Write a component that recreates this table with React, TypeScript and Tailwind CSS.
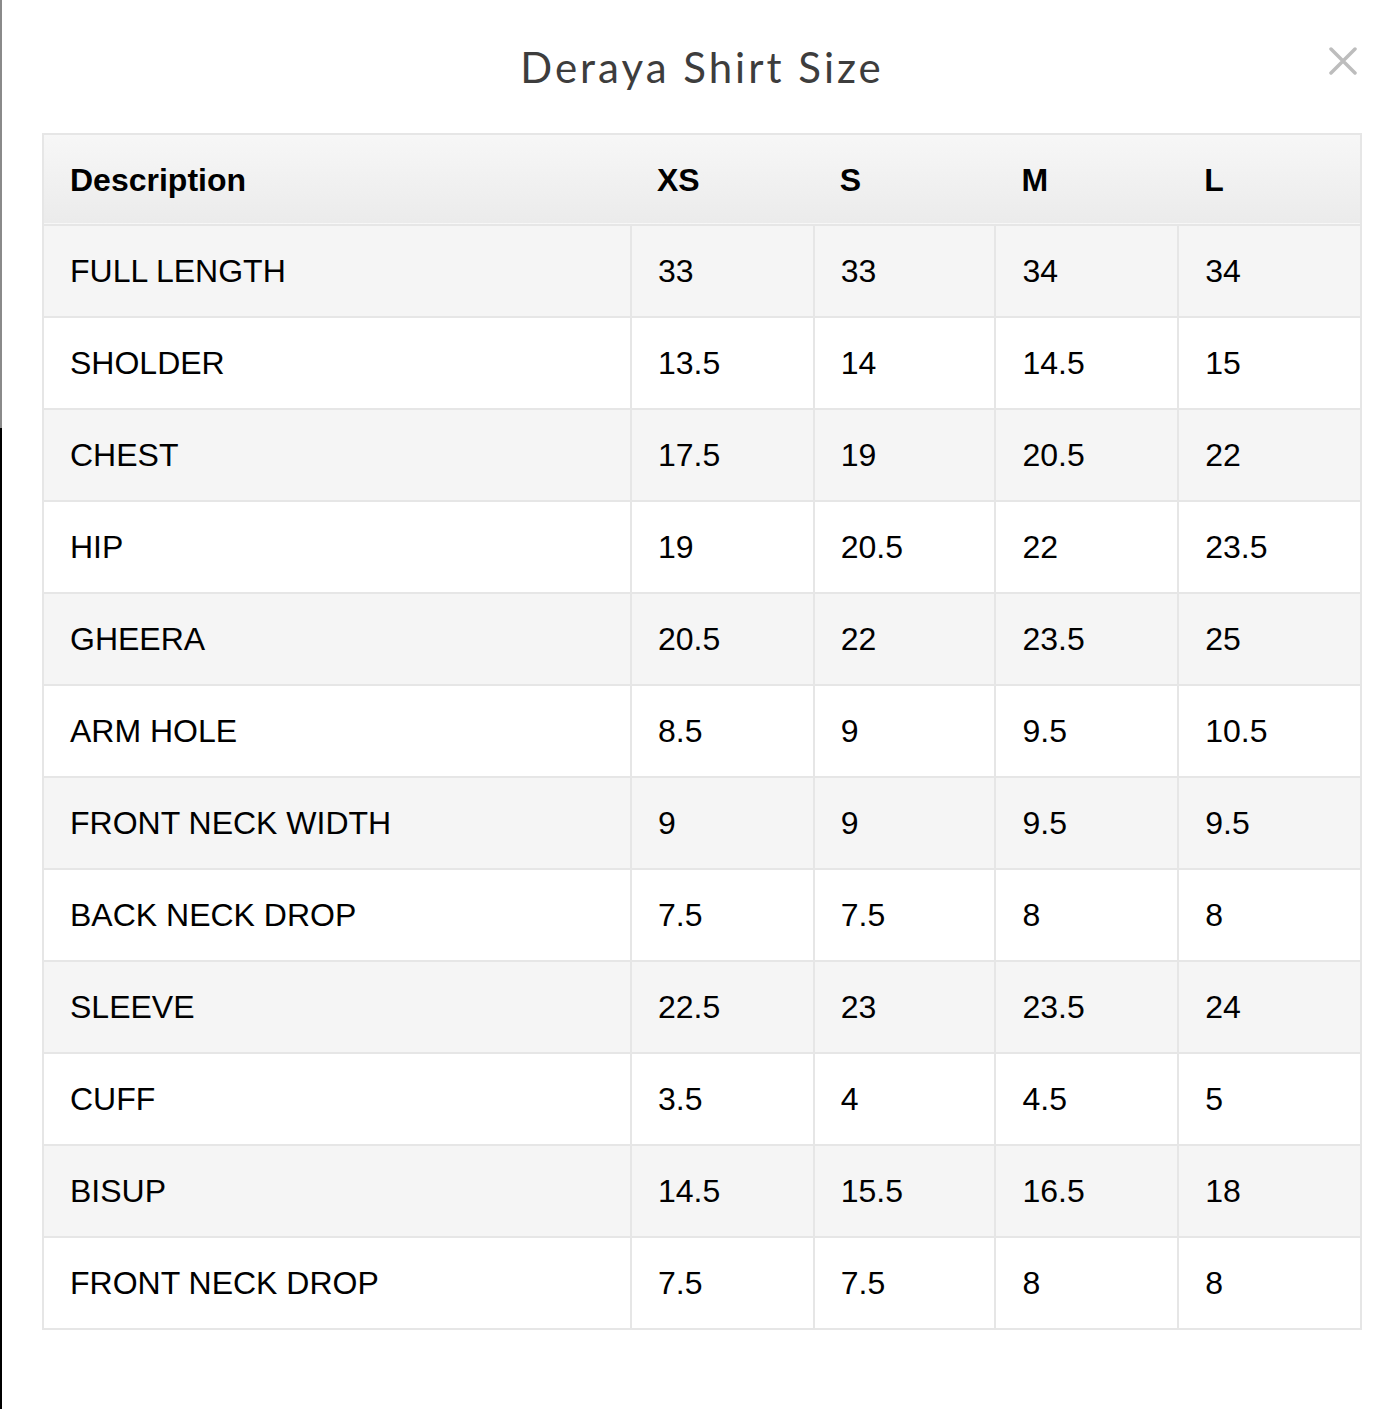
import React from 'react'

const sizes = ['XS', 'S', 'M', 'L']

const rows: [string, string[]][] = [
  ['FULL LENGTH', ['33', '33', '34', '34']],
  ['SHOLDER', ['13.5', '14', '14.5', '15']],
  ['CHEST', ['17.5', '19', '20.5', '22']],
  ['HIP', ['19', '20.5', '22', '23.5']],
  ['GHEERA', ['20.5', '22', '23.5', '25']],
  ['ARM HOLE', ['8.5', '9', '9.5', '10.5']],
  ['FRONT NECK WIDTH', ['9', '9', '9.5', '9.5']],
  ['BACK NECK DROP', ['7.5', '7.5', '8', '8']],
  ['SLEEVE', ['22.5', '23', '23.5', '24']],
  ['CUFF', ['3.5', '4', '4.5', '5']],
  ['BISUP', ['14.5', '15.5', '16.5', '18']],
  ['FRONT NECK DROP', ['7.5', '7.5', '8', '8']],
]

const App: React.FC = () => {
  return (
    <div className="flex w-full h-[1409px] bg-white">
      {/* page behind the modal, peeking at the edge */}
      <div className="flex flex-col w-[2px] shrink-0">
        <div className="h-[428px] bg-[#8a8a8a]" />
        <div className="flex-1 bg-black" />
      </div>

      <div className="relative flex-1 pl-[40px] pr-[35px]">
        <button className="absolute right-[40px] top-[47px] w-[28px] h-[28px] text-[#bdbdbd]">
          <svg viewBox="0 0 28 28" width="28" height="28" fill="none" stroke="currentColor" strokeWidth="3.5" strokeLinecap="round">
            <path d="M2 2 L26 26 M26 2 L2 26" />
          </svg>
        </button>

        <h2 className="pt-[40px] h-[133px] text-center text-[42px] leading-[54px] tracking-[3px] text-[#3d3d3d] font-['Lato','Liberation_Sans',sans-serif]">
          Deraya Shirt Size
        </h2>

        <table className="w-[1320px] border-collapse border-2 border-[#e6e6e6] font-['Liberation_Sans',Arial,sans-serif] text-[32px] text-black">
          <colgroup>
            <col className="w-[589px]" />
            <col className="w-[183px]" />
            <col className="w-[182px]" />
            <col className="w-[183px]" />
            <col className="w-[183px]" />
          </colgroup>
          <thead>
            <tr className="bg-gradient-to-b from-[#f7f7f7] to-[#ebebeb] border-b-2 border-[#e2e2e2]">
              <th className="h-[91px] pl-[26px] text-left font-bold">Description</th>
              {sizes.map(s => (
                <th key={s} className="pl-[26px] text-left font-bold">{s}</th>
              ))}
            </tr>
          </thead>
          <tbody>
            {rows.map(([label, vals], i) => (
              <tr key={label} className={i % 2 === 0 ? 'bg-[#f5f5f5]' : 'bg-white'}>
                <td className="h-[92px] pl-[26px] border-2 border-[#e6e6e6]">{label}</td>
                {vals.map((v, j) => (
                  <td key={j} className="pl-[26px] border-2 border-[#e6e6e6]">{v}</td>
                ))}
              </tr>
            ))}
          </tbody>
        </table>
      </div>
    </div>
  )
}

export default App
